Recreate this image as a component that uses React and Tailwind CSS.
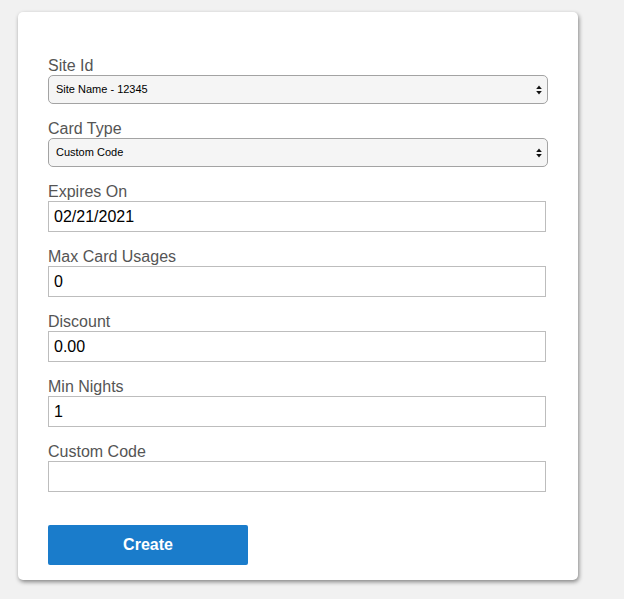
import React, { useState } from 'react';

const SelectArrows = () => (
  <svg width="6" height="10" viewBox="0 0 6 10" className="pointer-events-none absolute right-[6px] top-1/2 -translate-y-1/2">
    <path d="M3 0.5 L5.8 4 H0.2 Z" fill="#111" />
    <path d="M3 9.5 L5.8 6 H0.2 Z" fill="#111" />
  </svg>
);

const Field = ({ label, children }) => (
  <div className="mb-[15px]">
    <label className="block text-[16px] leading-[19px] text-[#555]">{label}</label>
    {children}
  </div>
);

const SelectBox = ({ value, onChange, options }) => (
  <div className="relative w-[500px]">
    <select
      value={value}
      onChange={e => onChange(e.target.value)}
      className="block w-full h-[29px] appearance-none rounded-[5px] border border-[#a3a3a3] bg-[#f5f5f5] pl-[7px] pr-5 text-[11px] text-black outline-none"
    >
      {options.map(o => <option key={o}>{o}</option>)}
    </select>
    <SelectArrows />
  </div>
);

const TextBox = ({ value, onChange }) => (
  <input
    value={value}
    onChange={e => onChange(e.target.value)}
    className="block w-[498px] h-[31px] border border-[#bdbdbd] bg-white px-[5px] text-[16px] text-black outline-none"
  />
);

export default function App() {
  const [form, setForm] = useState({
    site: 'Site Name - 12345',
    cardType: 'Custom Code',
    expires: '02/21/2021',
    maxUsages: '0',
    discount: '0.00',
    minNights: '1',
    customCode: '',
  });

  const set = key => val => setForm(prev => ({ ...prev, [key]: val }));

  return (
    <div className="min-h-screen bg-[#f1f1f1] pt-[12px] pl-[18px]" style={{ fontFamily: '"Liberation Sans", Arial, sans-serif' }}>
      <div className="w-[560px] h-[568px] bg-white rounded-[5px] shadow-[1px_2px_4px_rgba(0,0,0,0.45)] pt-[44px] pl-[30px]">
        <Field label="Site Id">
          <SelectBox value={form.site} onChange={set('site')} options={['Site Name - 12345']} />
        </Field>
        <Field label="Card Type">
          <SelectBox value={form.cardType} onChange={set('cardType')} options={['Custom Code', 'Gift Card']} />
        </Field>
        <Field label="Expires On">
          <TextBox value={form.expires} onChange={set('expires')} />
        </Field>
        <Field label="Max Card Usages">
          <TextBox value={form.maxUsages} onChange={set('maxUsages')} />
        </Field>
        <Field label="Discount">
          <TextBox value={form.discount} onChange={set('discount')} />
        </Field>
        <Field label="Min Nights">
          <TextBox value={form.minNights} onChange={set('minNights')} />
        </Field>
        <Field label="Custom Code">
          <TextBox value={form.customCode} onChange={set('customCode')} />
        </Field>

        <button className="mt-[18px] w-[200px] h-[40px] rounded-[2px] bg-[#1a7ccb] text-white text-[16px] font-bold">
          Create
        </button>
      </div>
    </div>
  );
}
